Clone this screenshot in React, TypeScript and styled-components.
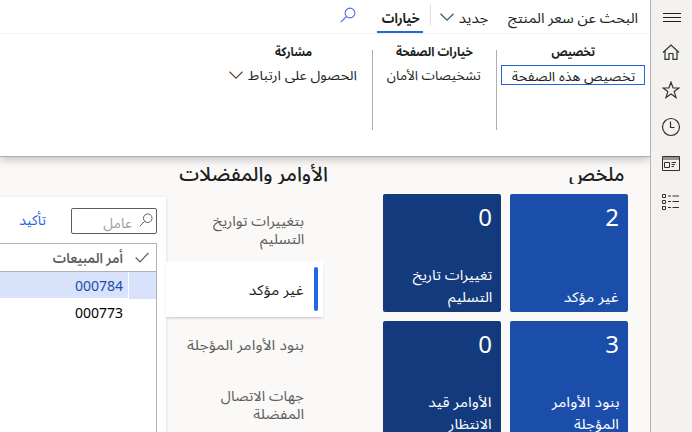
import React from "react";
import styled, { createGlobalStyle } from "styled-components";

const GlobalStyle = createGlobalStyle`
  * { box-sizing: border-box; }
  body { margin: 0; overflow: hidden; background: #faf9f8; }
`;

const Page = styled.div`
  direction: rtl;
  display: flex;
  width: 692px;
  height: 432px;
  overflow: hidden;
  color: #201f1e;
  background: #faf9f8;
  font-family: "Noto Sans", "Noto Sans Arabic", "DejaVu Sans", sans-serif;
  font-size: 14px;
`;

const Rail = styled.nav`
  flex: 0 0 42px;
  display: flex;
  flex-direction: column;
  align-items: center;
  padding: 6px 1px 0 0;
  background: #f3f2f1;
  border-left: 1px solid #b3b0ad;
  z-index: 3;
`;

const RailButton = styled.div<{ $h: number }>`
  height: ${(p) => p.$h}px;
  display: flex;
  align-items: center;
  justify-content: center;
`;

const Main = styled.main`
  flex: 1;
  min-width: 0;
  display: flex;
  flex-direction: column;
`;

const Text = styled.span<{ $sx?: number; $origin?: string }>`
  display: inline-block;
  white-space: nowrap;
  transform: scaleX(${(p) => p.$sx ?? 1});
  transform-origin: ${(p) => p.$origin ?? "right"} center;
`;

const TopBar = styled.header`
  flex: 0 0 33px;
  display: flex;
  background: #fff;
  padding-right: 12px;
  position: relative;
  z-index: 3;
`;

const TopItem = styled.div<{ $w: number; $active?: boolean }>`
  width: ${(p) => p.$w}px;
  height: 33px;
  line-height: 35px;
  white-space: nowrap;
  font-weight: ${(p) => (p.$active ? 700 : 400)};
  border-bottom: ${(p) => (p.$active ? "2px solid #2266e3" : "0")};
  padding-right: ${(p) => (p.$active ? 3 : 0)}px;
`;

const IconSlot = styled.div<{ $top: number; $start?: number }>`
  padding: ${(p) => p.$top}px ${(p) => p.$start ?? 0}px 0 0;
  line-height: 0;
`;

const TopDivider = styled.div`
  width: 1px;
  height: 22px;
  margin: 4px 9px 0 7px;
  background: #e1dfdd;
`;

const Ribbon = styled.section`
  flex: 0 0 124px;
  display: flex;
  background: #fff;
  border-top: 1px solid #f4f3f2;
  border-bottom: 1px solid #b0aeac;
  box-shadow: 0 2px 9px rgba(0, 0, 0, 0.25);
  padding: 9px 5px 0 0;
  z-index: 2;
`;

const Group = styled.div<{ $w: number }>`
  width: ${(p) => p.$w}px;
`;

const GroupTitle = styled.div`
  height: 18px;
  line-height: 18px;
  margin-bottom: 4px;
  text-align: center;
  font-size: 12.5px;
  font-weight: 700;
  color: #201f1e;
`;

const GroupAction = styled.div<{ $focus?: boolean }>`
  height: 20px;
  line-height: 21px;
  overflow: hidden;
  display: flex;
  font-size: 13px;
  padding-right: ${(p) => (p.$focus ? 9 : 10)}px;
  border: ${(p) => (p.$focus ? "1px solid #2266e3" : "0")};
`;

const GroupDivider = styled.div`
  width: 1px;
  height: 80px;
  margin: 7px 4px 0 5px;
  background: #b3aeaa;
`;

const Workspace = styled.div`
  flex: 1;
  display: flex;
  min-height: 0;
`;

const Heading = styled.h2`
  margin: 0;
  flex: none;
  height: 27px;
  line-height: 34px;
  overflow: hidden;
  font-size: 20px;
  font-weight: 500;
  white-space: nowrap;
`;

const Summary = styled.section`
  flex: 0 0 245px;
  margin-right: 22px;
  & > ${Heading} { padding-right: 3px; }
`;

const Tiles = styled.div`
  display: grid;
  grid-template-columns: 118px 118px;
  grid-auto-rows: 118px;
  gap: 9px;
  margin-top: 10px;
`;

const Tile = styled.div<{ $dark?: boolean }>`
  display: flex;
  flex-direction: column;
  justify-content: space-between;
  padding: 7px 9px 4px;
  border-radius: 2px;
  color: #fff;
  background: ${(p) => (p.$dark ? "#133a7c" : "#1b4dab")};
`;

const TileCount = styled.div`
  font-size: 24px;
  line-height: 32px;
`;

const TileLabel = styled.div`
  display: flex;
  flex-direction: column;
  align-items: flex-start;
  line-height: 22px;
`;

const Orders = styled.section`
  flex: 1;
  min-width: 0;
  display: flex;
  flex-direction: column;
  & > ${Heading} { margin-right: 55px; }
`;

const OrdersBody = styled.div`
  display: flex;
  flex: 1;
  padding-right: 60px;
`;

const Tabs = styled.div`
  flex: 0 0 157px;
  z-index: 1;
`;

const Tab = styled.div<{ $h: number; $top?: number; $active?: boolean }>`
  height: ${(p) => p.$h}px;
  display: flex;
  flex-direction: column;
  align-items: flex-start;
  justify-content: center;
  position: relative;
  padding: ${(p) => p.$top ?? 0}px 19px 0 0;
  line-height: 18px;
  color: ${(p) => (p.$active ? "#201f1e" : "#605e5c")};
  background: ${(p) => (p.$active ? "#fff" : "transparent")};
  box-shadow: ${(p) => (p.$active ? "0 2px 3px -1px rgba(0,0,0,.22)" : "none")};
`;

const ActiveBar = styled.i`
  position: absolute;
  right: 5px;
  top: 5px;
  bottom: 6px;
  width: 4px;
  border-radius: 2px;
  background: #2266e3;
`;

const Panel = styled.div`
  flex: 1;
  margin-top: 13px;
  padding: 11px 9px 0 0;
  background: #fff;
  box-shadow: 0 1px 3px rgba(0, 0, 0, 0.16);
`;

const Toolbar = styled.div`
  display: flex;
  height: 26px;
`;

const Filter = styled.div`
  width: 86px;
  height: 26px;
  display: flex;
  padding: 4px 3px 0 0;
  gap: 7px;
  line-height: 20px;
  border: 1px solid #605e5c;
  border-radius: 2px;
  color: #a19f9d;
`;

const Confirm = styled.div`
  margin-right: 25px;
  line-height: 24px;
  color: #2266e3;
`;

const Table = styled.div`
  margin-top: 9px;
  height: 200px;
  border: 1px solid #b3b0ad;
  border-left: 0;
`;

const Row = styled.div<{ $kind?: "head" | "selected" }>`
  display: flex;
  height: ${(p) => (p.$kind === "head" ? 28 : 27)}px;
  line-height: 27px;
  font-weight: ${(p) => (p.$kind === "head" ? 600 : 400)};
  color: ${(p) => (p.$kind === "head" ? "#605e5c" : p.$kind ? "#1b4dab" : "#000")};
  background: ${(p) => (p.$kind === "selected" ? "#d8e3fb" : "#fff")};
  border-bottom: ${(p) => (p.$kind === "head" ? "1px solid #b3b0ad" : "0")};
`;

const CheckCell = styled.div<{ $line?: boolean }>`
  width: 28px;
  padding: 8px 7px 0 0;
  line-height: 0;
  border-left: ${(p) => (p.$line ? "1px solid #fff" : "0")};
`;

const Cell = styled.div<{ $line?: boolean }>`
  flex: 1;
  padding-right: 5px;
  border-bottom: ${(p) => (p.$line ? "1px solid #fff" : "0")};
`;

const Svg = ({ w, h, color = "#323130", line = 1.2, children }: { w: number; h: number; color?: string; line?: number; children: React.ReactNode }) => (
  <svg width={w} height={h} viewBox={`0 0 ${w} ${h}`} fill="none" stroke={color} strokeWidth={line}>
    {children}
  </svg>
);

const SearchIcon = ({ color, size = 16 }: { color: string; size?: number }) => (
  <svg width={size} height={size} viewBox="0 0 16 16" fill="none" stroke={color} strokeWidth="1.1">
    <circle cx="10" cy="6" r="4.9" />
    <path d="M6.5 9.5 .8 15.2" />
  </svg>
);

const Chevron = ({ color = "#323130" }: { color?: string }) => (
  <Svg w={14} h={8} color={color}>
    <path d="M.5 .7 7 7.1 13.5 .7" />
  </Svg>
);

export default function App() {
  return (
    <>
      <GlobalStyle />
      <Page>
        <Rail>
          <RailButton $h={24}>
            <Svg w={20} h={10} line={1} color="#201f1e"><path d="M2 .5H20M2 4.5H20M2 8.5H20" /></Svg>
          </RailButton>
          <RailButton $h={44}>
            <Svg w={18} h={16}><path d="M1 8.5 9 1 17 8.5M3 7V15.4H7V9.5H11V15.4H15V7" /></Svg>
          </RailButton>
          <RailButton $h={31}>
            <Svg w={18} h={18}><path d="M9 1.2 11.1 7H17L12.2 10.6 14 16.5 9 13 4 16.5 5.8 10.6 1 7H6.9Z" /></Svg>
          </RailButton>
          <RailButton $h={44}>
            <Svg w={20} h={20}><circle cx="10" cy="10" r="8.5" /><path d="M9.5 4.5V10.5H13.5" /></Svg>
          </RailButton>
          <RailButton $h={29}>
            <Svg w={18} h={15} line={1}>
              <path d="M1 2.5H17" stroke="#979593" strokeWidth="3" />
              <path d="M.5 .5H17.5V14.5H.5ZM2.5 6.5H7.5V11.5H2.5ZM9.5 6.5H14M9.5 8.5H13M9.5 10.5H12" />
            </Svg>
          </RailButton>
          <RailButton $h={48}>
            <Svg w={18} h={16} line={1}>
              <path d="M.5 .5H3.5V3.5H.5ZM.5 6.5H3.5V9.5H.5ZM.5 12.5H3.5V15.5H.5ZM6 2H9M10.5 2H17M6 7.5H9M10.5 7.5H17M6 13.5H9M10.5 13.5H17" />
            </Svg>
          </RailButton>
        </Rail>
        <Main>
          <TopBar>
            <TopItem $w={150}><Text $sx={1.065}>البحث عن سعر المنتج</Text></TopItem>
            <TopItem $w={34}><Text $sx={1.08}>جديد</Text></TopItem>
            <IconSlot $top={13}><Chevron color="#2f5d5e" /></IconSlot>
            <TopDivider />
            <TopItem $w={46} $active><Text $sx={0.89}>خيارات</Text></TopItem>
            <IconSlot $top={7} $start={21}><SearchIcon color="#4f6bed" /></IconSlot>
          </TopBar>
          <Ribbon>
            <Group $w={144}>
              <GroupTitle><Text $sx={0.9} $origin="center">تخصيص</Text></GroupTitle>
              <GroupAction $focus><Text $sx={1.09}>تخصيص هذه الصفحة</Text></GroupAction>
            </Group>
            <GroupDivider />
            <Group $w={114}>
              <GroupTitle><Text $sx={0.93} $origin="center">خيارات الصفحة</Text></GroupTitle>
              <GroupAction><Text $sx={1.035}>تشخيصات الأمان</Text></GroupAction>
            </Group>
            <GroupDivider />
            <Group $w={147}>
              <GroupTitle><Text $sx={0.9} $origin="center">مشاركة</Text></GroupTitle>
              <GroupAction>
                <Text $sx={1.1}>الحصول على ارتباط</Text>
                <IconSlot $top={6} $start={15}><Chevron color="#5c4632" /></IconSlot>
              </GroupAction>
            </Group>
          </Ribbon>
          <Workspace>
            <Summary>
              <Heading><Text $sx={0.965}>ملخص</Text></Heading>
              <Tiles>
                <Tile><TileCount>2</TileCount><TileLabel><Text $sx={1.13}>غير مؤكد</Text></TileLabel></Tile>
                <Tile $dark><TileCount>0</TileCount><TileLabel><Text $sx={1.07}>تغييرات تاريخ</Text><Text $sx={1.07}>التسليم</Text></TileLabel></Tile>
                <Tile><TileCount>3</TileCount><TileLabel><Text $sx={1.14}>بنود الأوامر</Text><Text $sx={1.1}>المؤجلة</Text></TileLabel></Tile>
                <Tile $dark><TileCount>0</TileCount><TileLabel><Text $sx={1.12}>الأوامر قيد</Text><Text $sx={1.08}>الانتظار</Text></TileLabel></Tile>
              </Tiles>
            </Summary>
            <Orders>
              <Heading><Text>الأوامر والمفضلات</Text></Heading>
              <OrdersBody>
                <Tabs>
                  <Tab $h={78} $top={14}><Text $sx={1.07}>بتغييرات تواريخ</Text><Text $sx={1.07}>التسليم</Text></Tab>
                  <Tab $h={55} $active><ActiveBar /><Text $sx={1.13}>غير مؤكد</Text></Tab>
                  <Tab $h={55}><Text $sx={1.125}>بنود الأوامر المؤجلة</Text></Tab>
                  <Tab $h={65}><Text $sx={1.04}>جهات الاتصال</Text><Text $sx={1.1}>المفضلة</Text></Tab>
                </Tabs>
                <Panel>
                  <Toolbar>
                    <Filter><SearchIcon color="#605e5c" size={14} /><Text>عامل</Text></Filter>
                    <Confirm><Text>تأكيد</Text></Confirm>
                  </Toolbar>
                  <Table>
                    <Row $kind="head">
                      <CheckCell><Svg w={14} h={11} color="#605e5c"><path d="M.7 5.5 5 9.8 13.4 1" /></Svg></CheckCell>
                      <Cell><Text $sx={0.95}>أمر المبيعات</Text></Cell>
                    </Row>
                    <Row $kind="selected"><CheckCell $line /><Cell $line><Text>000784</Text></Cell></Row>
                    <Row><CheckCell /><Cell><Text>000773</Text></Cell></Row>
                  </Table>
                </Panel>
              </OrdersBody>
            </Orders>
          </Workspace>
        </Main>
      </Page>
    </>
  );
}
